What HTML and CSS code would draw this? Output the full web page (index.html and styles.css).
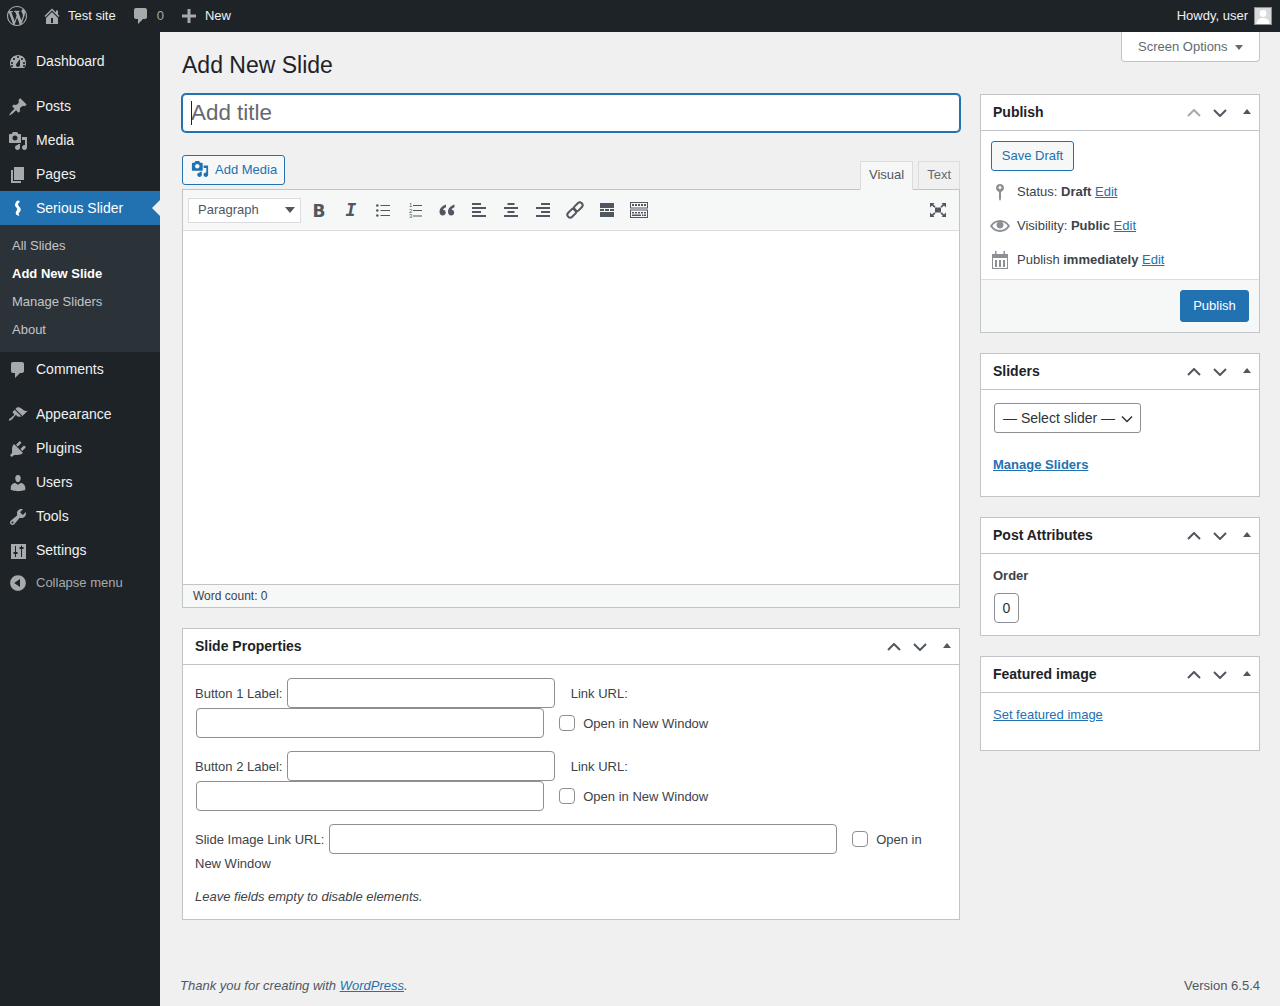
FILE: index.html
```html
<!DOCTYPE html>
<html lang="en">
<head>
    <meta charset="UTF-8">
    <meta name="viewport" content="width=device-width, initial-scale=1.0">
    <title>Add New Slide</title>
    <link rel="stylesheet" href="styles.css">
</head>
<body>

    <svg class="sprite" width="0" height="0">
        <symbol id="chev-up" viewBox="0 0 14 8"><path d="M1 7l6-6 6 6" fill="none" stroke="currentColor" stroke-width="2"/></symbol>
        <symbol id="chev-down" viewBox="0 0 14 8"><path d="M1 1l6 6 6-6" fill="none" stroke="currentColor" stroke-width="2"/></symbol>
        <symbol id="media" viewBox="0 0 20 20"><path d="M13 11V4c0-.55-.45-1-1-1h-1.67L9 1H5L3.67 3H2c-.55 0-1 .45-1 1v7c0 .55.45 1 1 1h10c.55 0 1-.45 1-1zM7 4.5c1.38 0 2.5 1.12 2.5 2.5S8.38 9.5 7 9.5 4.5 8.38 4.5 7 5.62 4.5 7 4.5zM14 6h5v10.5c0 1.38-1.12 2.5-2.5 2.5S14 17.88 14 16.5s1.12-2.5 2.5-2.5c.17 0 .34.02.5.05V9h-3V6zm-4 8.05V13h2v3.5c0 1.38-1.12 2.5-2.5 2.5S7 17.88 7 16.5 8.12 14 9.5 14c.17 0 .34.02.5.05z" fill-rule="evenodd"/></symbol>
        <symbol id="comment" viewBox="0 0 20 20"><path d="M5 2h9c1.1 0 2 .9 2 2v7c0 1.1-.9 2-2 2h-2l-5 5v-5H5c-1.1 0-2-.9-2-2V4c0-1.1.9-2 2-2z"/></symbol>
    </svg>

    <!-- top bar -->
    <header class="adminbar">
        <svg class="bar-logo" viewBox="0 0 20 20"><path fill-rule="evenodd" d="M20 10c0-5.51-4.49-10-10-10C4.48 0 0 4.49 0 10c0 5.52 4.48 10 10 10 5.51 0 10-4.48 10-10zM7.78 15.37L4.37 6.22c.55-.02 1.17-.08 1.17-.08.5-.06.44-1.13-.06-1.11 0 0-1.45.11-2.37.11-.18 0-.37 0-.58-.01C4.12 2.69 6.87 1.11 10 1.11c2.33 0 4.45.87 6.05 2.34-.68-.11-1.65.39-1.65 1.58 0 .74.45 1.36.9 2.1.35.61.55 1.36.55 2.46 0 1.49-1.4 5-1.4 5l-3.03-8.37c.54-.02.82-.17.82-.17.5-.05.44-1.25-.06-1.22 0 0-1.44.12-2.38.12-.87 0-2.33-.12-2.33-.12-.5-.03-.56 1.2-.06 1.22l.92.08 1.26 3.41zM17.41 10c.24-.64.74-1.87.43-4.25.7 1.29 1.05 2.71 1.05 4.25 0 3.29-1.73 6.24-4.4 7.78.97-2.59 1.94-5.2 2.92-7.78zM6.1 18.09C3.12 16.65 1.11 13.53 1.11 10c0-1.3.23-2.48.72-3.59C3.25 10.3 4.67 14.2 6.1 18.09zm4.03-6.63l2.58 6.98c-.86.29-1.76.45-2.71.45-.79 0-1.57-.11-2.29-.33.81-2.38 1.62-4.74 2.42-7.1z"/></svg>
        <a class="bar-item bar-site">
            <svg class="bar-icon" viewBox="0 0 20 20"><path fill-rule="evenodd" d="M16 8.5l1.53 1.53-1.06 1.06L10 4.62l-6.47 6.47-1.06-1.06L10 2.5l4 4v-2h2v4zm-6-2.46l6 5.99V18H4v-6.03zM11 17v-5H9v5h2z"/></svg>
            Test site
        </a>
        <a class="bar-item bar-comments">
            <svg class="bar-icon"><use href="#comment"/></svg>
            <span class="bar-count">0</span>
        </a>
        <a class="bar-item bar-new">
            <svg class="bar-icon" viewBox="0 0 20 20"><path d="M8.5 3h3v5.500H17v3h-5.500V17h-3v-5.500H3v-3h5.500z"/></svg>
            New
        </a>
        <a class="bar-item bar-account">
            Howdy, user
            <span class="avatar">
                <svg viewBox="0 0 16 16"><rect width="16" height="16" fill="#d8d9da"/><circle cx="8" cy="5.5" r="3.4" fill="#fff"/><path d="M1.5 16c0-4 3-6 6.5-6s6.5 2 6.5 6z" fill="#fff"/></svg>
            </span>
        </a>
    </header>

    <div class="layout">
        <!-- side menu -->
        <nav class="sidebar">
            <ul class="menu">
                <li class="menu-item">
                    <svg class="menu-icon" viewBox="0 0 20 20"><path fill-rule="evenodd" d="M3.76 16h12.48c1.1-1.37 1.76-3.11 1.76-5 0-4.42-3.58-8-8-8s-8 3.58-8 8c0 1.89.66 3.63 1.76 5zM10 4c.55 0 1 .45 1 1s-.45 1-1 1-1-.45-1-1 .45-1 1-1zM6 6c.55 0 1 .45 1 1s-.45 1-1 1-1-.45-1-1 .45-1 1-1zm8 0c.55 0 1 .45 1 1s-.45 1-1 1-1-.45-1-1 .45-1 1-1zm-5.37 5.55L12 7v6c0 1.1-.9 2-2 2s-2-.9-2-2c0-.57.24-1.08.63-1.45zM4 10c.55 0 1 .45 1 1s-.45 1-1 1-1-.45-1-1 .45-1 1-1zm12 0c.55 0 1 .45 1 1s-.45 1-1 1-1-.45-1-1 .45-1 1-1zm-12 3c.55 0 1 .45 1 1s-.45 1-1 1-1-.45-1-1 .45-1 1-1zm12 0c.55 0 1 .45 1 1s-.45 1-1 1-1-.45-1-1 .45-1 1-1z"/></svg>
                    Dashboard
                </li>
                <li class="menu-item menu-gap">
                    <svg class="menu-icon" viewBox="0 0 20 20"><path d="M10.44 3.02l1.82-1.82 6.36 6.35-1.83 1.82c-1.05-.68-2.48-.57-3.41.36l-.75.75c-.92.93-1.04 2.35-.35 3.41l-1.83 1.82-2.41-2.41-2.8 2.79c-.42.42-3.38 2.71-3.8 2.29s1.86-3.39 2.28-3.81l2.79-2.79L4.1 9.36l1.83-1.82c1.05.69 2.48.57 3.4-.36l.75-.75c.93-.92 1.05-2.35.36-3.41z"/></svg>
                    Posts
                </li>
                <li class="menu-item">
                    <svg class="menu-icon"><use href="#media"/></svg>
                    Media
                </li>
                <li class="menu-item">
                    <svg class="menu-icon" viewBox="0 0 20 20"><path d="M6 15V2h10v13H6zm-1 1h8v2H3V5h2v11z"/></svg>
                    Pages
                </li>
                <li class="menu-item menu-current">
                    <svg class="menu-icon" viewBox="0 0 20 20"><path d="M10 1.500c1.800 0 2.300 1.100 1.200 2.100-1 .9-1.500 1.700-.9 2.800.6 1 1.900 1.800 2.300 3.200.5 1.700-.3 3-1.300 4-.7.700-.8 1.500-.2 2.300.4.600.1 1-.5.900-1.900-.2-3.100-1.500-2.900-3.200.1-1.300 1.300-1.900 1.500-3 .2-1.300-1.300-2.200-2-3.500C6.600 5.800 8 1.500 10 1.500z"/></svg>
                    Serious Slider
                </li>
                <li class="submenu">
                    <a>All Slides</a>
                    <a class="submenu-current">Add New Slide</a>
                    <a>Manage Sliders</a>
                    <a>About</a>
                </li>
                <li class="menu-item">
                    <svg class="menu-icon"><use href="#comment"/></svg>
                    Comments
                </li>
                <li class="menu-item menu-gap">
                    <svg class="menu-icon" viewBox="0 0 20 20"><path d="M14.48 11.06L7.41 3.99l1.5-1.5c.5-.56 2.3-.47 3.51.32 1.21.8 1.43 1.28 2.91 2.1 1.18.64 2.45 1.26 4.45.85zm-.71.71L6.7 4.7 4.93 6.47c-.39.39-.39 1.02 0 1.41l1.06 1.06c.39.39.39 1.03 0 1.42-.6.6-1.43 1.11-2.21 1.69-.35.26-.7.53-1.01.84C1.43 13.23.4 14.84 1.05 15.5c.65.65 2.27-.38 3.61-1.72.31-.31.58-.66.84-1.01.58-.78 1.09-1.61 1.69-2.21.39-.39 1.02-.39 1.41 0l1.06 1.06c.39.39 1.02.39 1.41 0z"/></svg>
                    Appearance
                </li>
                <li class="menu-item">
                    <svg class="menu-icon" viewBox="0 0 20 20"><path d="M13.11 4.36L9.87 7.6 8 5.73l3.24-3.24c.35-.34 1.05-.2 1.56.32.52.51.66 1.21.31 1.55zm-8 1.77l.91-1.12 9.01 9.01-1.19.84c-.71.71-2.63 1.16-3.82 1.16H6.14L4.9 17.26c-.59.59-1.54.59-2.12 0-.59-.58-.59-1.53 0-2.12l1.24-1.24v-3.88c0-1.13.4-3.19 1.09-3.89zm7.26 3.97l3.24-3.24c.34-.35 1.04-.21 1.55.31.52.51.66 1.21.31 1.55l-3.24 3.25z"/></svg>
                    Plugins
                </li>
                <li class="menu-item">
                    <svg class="menu-icon" viewBox="0 0 20 20"><path d="M10 9.25c-2.27 0-2.73-3.44-2.73-3.44C7 4.02 7.82 2 9.97 2c2.16 0 2.98 2.02 2.71 3.81 0 0-.41 3.44-2.68 3.44zm0 2.57L12.72 10c2.39 0 4.52 2.33 4.52 4.53v2.49s-3.65 1.13-7.24 1.13c-3.65 0-7.24-1.13-7.24-1.13v-2.49c0-2.25 1.94-4.48 4.47-4.48z"/></svg>
                    Users
                </li>
                <li class="menu-item">
                    <svg class="menu-icon" viewBox="0 0 20 20"><path fill-rule="evenodd" d="M16.68 9.77c-1.34 1.34-3.3 1.67-4.95.99l-5.41 6.52c-.99.99-2.59.99-3.58 0s-.99-2.59 0-3.57l6.52-5.42c-.68-1.65-.35-3.61.99-4.95 1.28-1.28 3.12-1.62 4.72-1.06l-2.89 2.89 2.82 2.82 2.86-2.87c.53 1.58.18 3.39-1.08 4.65zM3.81 16.21c.4.39 1.04.39 1.43 0 .4-.4.4-1.04 0-1.43-.39-.4-1.03-.4-1.43 0-.39.39-.39 1.03 0 1.43z"/></svg>
                    Tools
                </li>
                <li class="menu-item">
                    <svg class="menu-icon" viewBox="0 0 20 20"><path fill-rule="evenodd" d="M18 3H3v15h15zM8 11h1.500v2H8v3H7v-3H5.500v-2H7V5h1zm5-3h-1.500V6H13V4.500h1V6h1.500v2H14v8h-1z"/></svg>
                    Settings
                </li>
                <li class="menu-collapse">
                    <svg class="menu-icon" viewBox="0 0 20 20"><path fill-rule="evenodd" d="M10 2.160c4.330 0 7.840 3.510 7.840 7.840s-3.510 7.840-7.840 7.840S2.160 14.330 2.160 10 5.710 2.160 10 2.160zm2 11.720V6.120L6.180 9.970z"/></svg>
                    Collapse menu
                </li>
            </ul>
        </nav>

        <main class="content">
            <button class="screen-options">Screen Options <i class="arrow-down"></i></button>
            <h1 class="page-title">Add New Slide</h1>

            <div class="columns">
                <div class="main-col">
                    <div class="title-wrap">
                        <input class="title-input" type="text" placeholder="Add title">
                        <span class="title-caret"></span>
                    </div>

                    <div class="editor-tools">
                        <button class="btn btn-outline add-media">
                            <svg class="add-media-icon"><use href="#media"/></svg>
                            Add Media
                        </button>
                        <div class="editor-tabs">
                            <span class="tab tab-active">Visual</span>
                            <span class="tab">Text</span>
                        </div>
                    </div>

                    <div class="editor">
                        <div class="toolbar">
                            <div class="format-select">Paragraph <i class="arrow-down dark"></i></div>
                            <span class="tool tool-bold">B</span>
                            <span class="tool tool-italic">I</span>
                            <span class="tool">
                                <svg viewBox="0 0 20 20"><circle cx="4.300" cy="5.500" r="1.300"/><circle cx="4.300" cy="10.500" r="1.300"/><circle cx="4.300" cy="15.500" r="1.300"/><path d="M7.500 5h9.500v1H7.500zM7.500 10h9.500v1H7.500zM7.500 15h9.500v1H7.500z"/></svg>
                            </span>
                            <span class="tool">
                                <svg viewBox="0 0 20 20"><text x="4" y="7" class="tool-num">1</text><text x="4" y="12.500" class="tool-num">2</text><text x="4" y="18" class="tool-num">3</text><path d="M8 5h9v1H8zM8 10h9v1H8zM8 15.500h9v1H8z"/></svg>
                            </span>
                            <span class="tool">
                                <svg viewBox="0 0 20 20"><path d="M9 4.500C6 5.500 2.500 7.800 2.500 11.500c0 2.400 1.300 4 3.200 4 1.700 0 3-1.200 3-3 0-1.600-1.100-2.700-2.700-2.800.3-1.200 1.700-2 3-2.500zM17.500 4.500c-3 1-6.500 3.300-6.500 7 0 2.400 1.300 4 3.200 4 1.700 0 3-1.200 3-3 0-1.600-1.100-2.700-2.700-2.800.3-1.200 1.700-2 3-2.500z"/></svg>
                            </span>
                            <span class="tool">
                                <svg viewBox="0 0 20 20"><path d="M3 3h9v2H3zM3 7h14v2H3zM3 11h9v2H3zM3 15h14v2H3z"/></svg>
                            </span>
                            <span class="tool">
                                <svg viewBox="0 0 20 20"><path d="M6.500 3h7v2h-7zM3 7h14v2H3zM6.500 11h7v2h-7zM3 15h14v2H3z"/></svg>
                            </span>
                            <span class="tool">
                                <svg viewBox="0 0 20 20"><path d="M8 3h9v2H8zM3 7h14v2H3zM8 11h9v2H8zM3 15h14v2H3z"/></svg>
                            </span>
                            <span class="tool">
                                <svg class="tool-link" viewBox="0 0 20 20">
                                    <rect x="8.200" y="4" width="10" height="5.600" rx="2.800" transform="rotate(-45 13.200 6.800)"/>
                                    <rect x="1.800" y="10.400" width="10" height="5.600" rx="2.800" transform="rotate(-45 6.800 13.200)"/>
                                </svg>
                            </span>
                            <span class="tool">
                                <svg viewBox="0 0 20 20"><path d="M3 3h14v5H3zM3 9h4v2H3zM8 9h4v2H8zM13 9h4v2h-4zM3 12h14v5H3z"/></svg>
                            </span>
                            <span class="tool">
                                <svg viewBox="0 0 20 20"><path fill-rule="evenodd" d="M1 2h18v6.500H1zM2 3v4.500h16V3zM1 9.500h18V18H1zM2 10.500V17h16v-6.500z"/><path d="M3 4h2v2H3zM6 4h2v2H6zM9 4h2v2H9zM12 4h2v2h-2zM15 4h2v2h-2zM3 12h2v1.500H3zM6 12h2v1.500H6zM9 12h2v1.500H9zM12 12h2v1.500h-2zM15 12h2v1.500h-2zM3 14.500h9v1.500H3zM13 14.500h1.500v1.500H13zM15 14.500h2v1.500h-2z"/></svg>
                            </span>
                            <span class="tool tool-fullscreen">
                                <svg viewBox="0 0 20 20">
                                    <path d="M7 7.500h6v5H7z"/>
                                    <path d="M2 3h4.500L5.200 4.300 7.500 6.600 6.300 7.800 4 5.500 2 7.500z"/>
                                    <path d="M2 3h4.500L5.200 4.300 7.500 6.600 6.300 7.800 4 5.500 2 7.500z" transform="matrix(-1 0 0 1 20 0)"/>
                                    <path d="M2 3h4.500L5.200 4.300 7.500 6.600 6.300 7.800 4 5.500 2 7.500z" transform="matrix(1 0 0 -1 0 20)"/>
                                    <path d="M2 3h4.500L5.200 4.300 7.500 6.600 6.300 7.800 4 5.500 2 7.500z" transform="matrix(-1 0 0 -1 20 20)"/>
                                </svg>
                            </span>
                        </div>
                        <div class="edit-area"></div>
                        <div class="status-bar">Word count: 0</div>
                    </div>

                    <section class="box box-properties">
                        <div class="box-head">
                            <h2>Slide Properties</h2>
                            <span class="handle"><svg><use href="#chev-up"/></svg></span>
                            <span class="handle"><svg><use href="#chev-down"/></svg></span>
                            <span class="toggle"><i class="arrow-up"></i></span>
                        </div>
                        <div class="box-body">
                            <p class="prop-line">
                                Button 1 Label: <input class="text-in in-label" type="text"> <span class="link-label">Link URL:</span>
                                <input class="text-in in-url" type="text"> <input class="check" type="checkbox"> Open in New Window
                            </p>
                            <p class="prop-line">
                                Button 2 Label: <input class="text-in in-label" type="text"> <span class="link-label">Link URL:</span>
                                <input class="text-in in-url" type="text"> <input class="check" type="checkbox"> Open in New Window
                            </p>
                            <p class="prop-line">
                                Slide Image Link URL: <input class="text-in in-image" type="text"> <input class="check" type="checkbox"> Open in New Window
                            </p>
                            <p class="prop-note">Leave fields empty to disable elements.</p>
                        </div>
                    </section>
                </div>

                <aside class="side-col">
                    <section class="box">
                        <div class="box-head">
                            <h2>Publish</h2>
                            <span class="handle handle-off"><svg><use href="#chev-up"/></svg></span>
                            <span class="handle"><svg><use href="#chev-down"/></svg></span>
                            <span class="toggle"><i class="arrow-up"></i></span>
                        </div>
                        <div class="publish-main">
                            <button class="btn btn-outline save-draft">Save Draft</button>
                            <div class="misc-row">
                                <svg class="misc-icon" viewBox="0 0 20 20"><path fill-rule="evenodd" d="M14 6c0-2.500-1.800-4-4-4S6 3.500 6 6c0 1.900 1.300 3.400 3 3.900V17l1 2 1-2V9.900c1.700-.5 3-2 3-3.900zM8.500 5.500a1.500 1.500 0 1 1 3 0 1.500 1.500 0 0 1-3 0z"/></svg>
                                <span>Status: <b>Draft</b> <a>Edit</a></span>
                            </div>
                            <div class="misc-row">
                                <svg class="misc-icon" viewBox="0 0 20 20"><path d="M19.700 9.400C17.700 6 14 3.900 10 3.900S2.300 6 .3 9.400L0 10l.3.6c2 3.400 5.700 5.500 9.700 5.500s7.700-2.100 9.700-5.500l.3-.6-.3-.6zM10 14.100c-3.100 0-6-1.600-7.700-4.100C3.600 8 5.700 6.600 8 6.100c-.9.600-1.500 1.700-1.500 2.900 0 1.900 1.600 3.500 3.500 3.500s3.500-1.600 3.500-3.500c0-1.200-.6-2.300-1.500-2.900 2.300.5 4.400 1.900 5.700 3.900-1.700 2.500-4.600 4.100-7.700 4.100z"/></svg>
                                <span>Visibility: <b>Public</b> <a>Edit</a></span>
                            </div>
                            <div class="misc-row">
                                <svg class="misc-icon" viewBox="0 0 20 20"><path fill-rule="evenodd" d="M5 1h1.500v3h7V1H15v3h3v15H2V4h3zM3 8v10h14V8zM5 10h2v7H5zM9 10h2v7H9zM13 10h2v7h-2z"/></svg>
                                <span>Publish <b>immediately</b> <a>Edit</a></span>
                            </div>
                        </div>
                        <div class="publish-actions">
                            <button class="btn btn-primary">Publish</button>
                        </div>
                    </section>

                    <section class="box">
                        <div class="box-head">
                            <h2>Sliders</h2>
                            <span class="handle"><svg><use href="#chev-up"/></svg></span>
                            <span class="handle"><svg><use href="#chev-down"/></svg></span>
                            <span class="toggle"><i class="arrow-up"></i></span>
                        </div>
                        <div class="box-body sliders-body">
                            <div class="slider-select">
                                <span>— Select slider —</span>
                                <svg viewBox="0 0 14 8"><path d="M2 1.500l5 5 5-5" fill="none" stroke="#2c3338" stroke-width="1.500"/></svg>
                            </div>
                            <a class="manage-link">Manage Sliders</a>
                        </div>
                    </section>

                    <section class="box">
                        <div class="box-head">
                            <h2>Post Attributes</h2>
                            <span class="handle"><svg><use href="#chev-up"/></svg></span>
                            <span class="handle"><svg><use href="#chev-down"/></svg></span>
                            <span class="toggle"><i class="arrow-up"></i></span>
                        </div>
                        <div class="box-body attrs-body">
                            <b class="order-label">Order</b>
                            <div class="order-input">0</div>
                        </div>
                    </section>

                    <section class="box">
                        <div class="box-head">
                            <h2>Featured image</h2>
                            <span class="handle"><svg><use href="#chev-up"/></svg></span>
                            <span class="handle"><svg><use href="#chev-down"/></svg></span>
                            <span class="toggle"><i class="arrow-up"></i></span>
                        </div>
                        <div class="box-body featured-body">
                            <a>Set featured image</a>
                        </div>
                    </section>
                </aside>
            </div>

            <footer class="page-footer">
                <span class="thanks">Thank you for creating with <a>WordPress</a>.</span>
                <span>Version 6.5.4</span>
            </footer>
        </main>
    </div>

</body>
</html>
```

FILE: styles.css
```css
* {
    box-sizing: border-box;
}

html, body {
    height: 1006px;
    overflow: hidden;
}

body {
    margin: 0;
    background-color: #f0f0f1;
    color: #3c434a;
    font-family: "Liberation Sans", Arial, sans-serif;
    font-size: 13px;
    line-height: 1.4;
}

a {
    color: #2271b1;
    text-decoration: underline;
}

.sprite {
    position: absolute;
}

/* top bar */
.adminbar {
    display: flex;
    align-items: center;
    height: 32px;
    background-color: #1d2327;
    color: #f0f0f1;
}

.bar-logo {
    width: 20px;
    height: 20px;
    margin-left: 7px;
    fill: #a7aaad;
}

.bar-item {
    display: flex;
    align-items: center;
    color: #f0f0f1;
    text-decoration: none;
}

.bar-icon {
    width: 20px;
    height: 20px;
    fill: #a7aaad;
}

.bar-site {
    gap: 6px;
    margin-left: 15px;
}

.bar-comments {
    gap: 6px;
    margin-left: 15px;
}

.bar-count {
    color: #a7aaad;
}

.bar-new {
    gap: 6px;
    margin-left: 15px;
}

.bar-account {
    gap: 6px;
    margin-left: auto;
    margin-right: 8px;
}

.avatar {
    display: block;
    width: 18px;
    height: 18px;
    border: 1px solid #8c8f94;
}

.avatar svg {
    display: block;
    width: 16px;
    height: 16px;
}

.layout {
    display: flex;
    height: 974px;
}

/* side menu */
.sidebar {
    flex: none;
    width: 160px;
    background-color: #1d2327;
}

.menu {
    margin: 12px 0 0;
    padding: 0;
    list-style: none;
}

.menu-item {
    position: relative;
    display: flex;
    align-items: center;
    height: 34px;
    padding-top: 2px;
    color: #f0f0f1;
    font-size: 14px;
}

.menu-icon {
    flex: none;
    width: 20px;
    height: 20px;
    margin: 0 8px;
    fill: #a7aaad;
}

.menu-gap {
    margin-top: 11px;
}

.menu-current {
    background-color: #2271b1;
    color: #fff;
}

.menu-current .menu-icon {
    fill: #fff;
}

.menu-current::after {
    content: "";
    position: absolute;
    right: 0;
    top: 9px;
    border: 8px solid transparent;
    border-right-color: #f0f0f1;
}

.submenu {
    display: flex;
    flex-direction: column;
    height: 127px;
    padding: 7px 0;
    background-color: #2c3338;
}

.submenu a {
    height: 28px;
    padding-left: 12px;
    color: #c3c4c7;
    line-height: 28px;
    text-decoration: none;
}

.submenu .submenu-current {
    color: #fff;
    font-weight: 600;
}

.menu-collapse {
    display: flex;
    align-items: center;
    height: 32px;
    color: #a7aaad;
}

/* page */
.content {
    display: flex;
    flex-direction: column;
    flex: 1;
    min-width: 0;
    padding: 0 20px;
}

.screen-options {
    align-self: flex-end;
    display: flex;
    align-items: center;
    gap: 7px;
    width: 139px;
    height: 30px;
    padding: 2px 16px 0;
    border: 1px solid #c3c4c7;
    border-top: none;
    border-radius: 0 0 4px 4px;
    background-color: #fff;
    color: #646970;
    font: inherit;
}

.arrow-down {
    display: inline-block;
    border: 4px solid transparent;
    border-top: 5px solid #646970;
    border-bottom: none;
    border-left-width: 4.5px;
    border-right-width: 4.5px;
}

.arrow-down.dark {
    border-top-color: #50575e;
    border-top-width: 6px;
    border-left-width: 5px;
    border-right-width: 5px;
}

.page-title {
    margin: -12px 0 0 2px;
    color: #1d2327;
    font-size: 23px;
    font-weight: 400;
    line-height: 31px;
}

.columns {
    display: grid;
    grid-template-columns: 778px 280px;
    gap: 20px;
    margin: 13px 0 0 2px;
}

/* title field */
.title-wrap {
    position: relative;
}

.title-input {
    display: block;
    width: 100%;
    height: 38px;
    padding: 0 8px;
    border: 1px solid #2271b1;
    border-radius: 4px;
    box-shadow: 0 0 0 1px #2271b1;
    background-color: #fff;
    color: #2c3338;
    font-family: inherit;
    font-size: 22.4px;
    outline: none;
}

.title-input::placeholder {
    color: #646970;
    opacity: 1;
}

.title-caret {
    position: absolute;
    left: 9px;
    top: 7px;
    width: 1px;
    height: 24px;
    background-color: #1d2327;
}

/* editor */
.editor-tools {
    display: flex;
    align-items: flex-end;
    justify-content: space-between;
    height: 57px;
}

.btn {
    border-radius: 3px;
    font-family: inherit;
    font-size: 13px;
    cursor: pointer;
}

.btn-outline {
    border: 1px solid #2271b1;
    background-color: #f6f7f7;
    color: #2271b1;
}

.btn-primary {
    width: 69px;
    height: 32px;
    padding: 0 0 2px;
    border: 1px solid #2271b1;
    background-color: #2271b1;
    color: #fff;
}

.add-media {
    display: flex;
    align-items: center;
    gap: 6px;
    width: 103px;
    height: 30px;
    margin-bottom: 4px;
    padding: 0 8px 2px;
    white-space: nowrap;
}

.add-media-icon {
    flex: none;
    width: 18px;
    height: 18px;
    fill: #2271b1;
}

.editor-tabs {
    display: flex;
    gap: 5px;
    margin-bottom: -1px;
    position: relative;
    z-index: 1;
}

.tab {
    height: 29px;
    padding: 0 8px;
    border: 1px solid #dcdcde;
    border-bottom: 1px solid #c3c4c7;
    background-color: #f0f0f1;
    color: #646970;
    line-height: 26px;
}

.tab-active {
    border-color: #dcdcde;
    border-bottom-color: #f6f7f7;
    background-color: #f6f7f7;
    color: #50575e;
}

.editor {
    height: 419px;
    border: 1px solid #c3c4c7;
    display: flex;
    flex-direction: column;
    background-color: #fff;
}

.toolbar {
    display: flex;
    align-items: center;
    flex: none;
    height: 41px;
    padding-left: 5px;
    border-bottom: 1px solid #dcdcde;
    background-color: #f6f7f7;
}

.format-select {
    display: flex;
    align-items: center;
    justify-content: space-between;
    width: 113px;
    height: 25px;
    margin-right: 2px;
    padding: 0 5px 0 9px;
    border: 1px solid #dcdcde;
    background-color: #fff;
    color: #50575e;
}

.tool {
    display: flex;
    align-items: center;
    justify-content: center;
    width: 32px;
    height: 28px;
    color: #50575e;
}

.tool svg {
    width: 20px;
    height: 20px;
    fill: #50575e;
}

.tool .tool-link {
    fill: none;
    stroke: #50575e;
    stroke-width: 2;
}

.tool-bold {
    padding-top: 4px;
    font-family: "DejaVu Sans", sans-serif;
    font-size: 17px;
    font-weight: 700;
}

.tool-italic {
    font-family: "DejaVu Sans Mono", monospace;
    font-size: 18px;
    font-style: italic;
    font-weight: 700;
}

.tool-num {
    font-size: 6px;
}

.tool-fullscreen {
    margin-left: auto;
    margin-right: 5px;
}

.edit-area {
    flex: 1;
}

.status-bar {
    flex: none;
    height: 23px;
    padding: 0 10px;
    border-top: 1px solid #c3c4c7;
    background-color: #f6f7f7;
    color: #3c434a;
    font-size: 12px;
    line-height: 22px;
}

/* boxes */
.box {
    margin-bottom: 20px;
    border: 1px solid #c3c4c7;
    background-color: #fff;
}

.box-properties {
    margin-top: 20px;
    line-height: 1.5;
}

.box-head {
    display: flex;
    align-items: center;
    height: 36px;
    border-bottom: 1px solid #c3c4c7;
}

.box-head h2 {
    flex: 1;
    margin: 0;
    padding-left: 12px;
    color: #1d2327;
    font-size: 14px;
    font-weight: 600;
}

.handle {
    display: flex;
    align-items: center;
    justify-content: center;
    width: 26px;
    color: #50575e;
}

.handle svg {
    width: 14px;
    height: 8px;
}

.handle-off {
    color: #a7aaad;
}

.toggle {
    display: flex;
    justify-content: center;
    width: 25px;
    margin-left: 1px;
}

.arrow-up {
    display: block;
    margin-top: -2px;
    border-left: 4px solid transparent;
    border-right: 4px solid transparent;
    border-bottom: 5px solid #50575e;
}

.box-body {
    padding: 0 12px;
}

/* slide properties */
.box-properties .box-body {
    padding: 13px 12px 13px;
}

.prop-line {
    margin: 0 0 13px;
}

.text-in {
    height: 30px;
    margin: 0 1px;
    padding: 0 8px;
    border: 1px solid #8c8f94;
    border-radius: 4px;
    background-color: #fff;
    font-family: inherit;
    font-size: 13px;
}

.in-label {
    width: 268px;
}

.in-url {
    width: 348px;
}

.in-image {
    width: 508px;
}

.link-label {
    margin-left: 11px;
}

.check {
    appearance: none;
    width: 16px;
    height: 16px;
    margin: 0 5px 0 10px;
    border: 1px solid #8c8f94;
    border-radius: 4px;
    background-color: #fff;
    vertical-align: -3px;
}

.prop-note {
    margin: 0;
    font-style: italic;
}

/* publish */
.publish-main {
    padding: 10px 10px 0;
    height: 148px;
}

.save-draft {
    display: block;
    width: 83px;
    height: 30px;
    padding: 0 0 2px;
}

.misc-row {
    display: flex;
    align-items: center;
    height: 34px;
    gap: 7px;
}

.misc-row:nth-child(2) {
    margin-top: 4px;
}

.misc-icon {
    flex: none;
    width: 20px;
    height: 20px;
    margin-left: -1px;
    fill: #8c8f94;
}

.publish-actions {
    display: flex;
    justify-content: flex-end;
    height: 53px;
    padding: 10px;
    border-top: 1px solid #dcdcde;
    background-color: #f6f7f7;
}

/* sliders */
.sliders-body {
    height: 106px;
    padding-top: 13px;
}

.slider-select {
    display: flex;
    align-items: center;
    justify-content: space-between;
    width: 147px;
    height: 30px;
    margin-left: 1px;
    padding: 2px 6px 0 8px;
    border: 1px solid #8c8f94;
    border-radius: 3px;
    color: #2c3338;
    font-size: 14px;
}

.slider-select svg {
    width: 14px;
    height: 8px;
}

.manage-link {
    display: block;
    margin-top: 23px;
    font-weight: 700;
}

/* post attributes */
.attrs-body {
    height: 81px;
    padding-top: 13px;
}

.order-label {
    display: block;
    font-weight: 600;
    color: #3c434a;
}

.order-input {
    width: 25px;
    height: 30px;
    margin: 8px 0 0 1px;
    border: 1px solid #8c8f94;
    border-radius: 4px;
    color: #2c3338;
    font-size: 14px;
    line-height: 28px;
    text-align: center;
}

.featured-body {
    height: 57px;
    padding-top: 13px;
}

/* footer */
.page-footer {
    display: flex;
    justify-content: space-between;
    margin-top: auto;
    padding-bottom: 11px;
    color: #50575e;
}

.thanks {
    font-style: italic;
}
```
